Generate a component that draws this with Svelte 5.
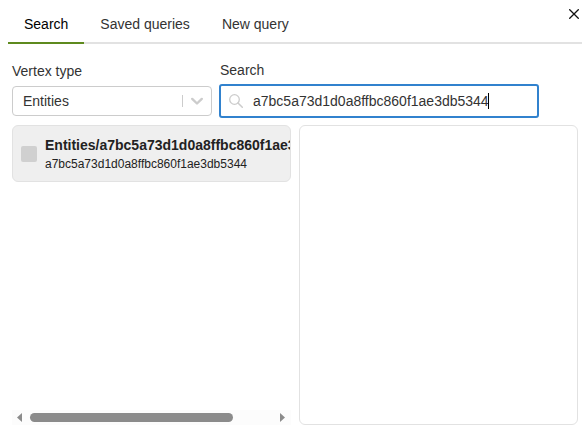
<script>
  const tabs = ['Search', 'Saved queries', 'New query'];
  let active = $state('Search');
  let vertexType = $state('Entities');
  let query = $state('a7bc5a73d1d0a8ffbc860f1ae3db5344');
  let checked = $state(false);
  const results = [
    { id: 'Entities/a7bc5a73d1d0a8ffbc860f1ae3db5344', key: 'a7bc5a73d1d0a8ffbc860f1ae3db5344' }
  ];

  const ctx = document.createElement('canvas').getContext('2d');
  ctx.font = '14px "Liberation Sans"';
  const caretOffset = $derived(Math.floor(ctx.measureText(query).width));
</script>

<div class="dialog">
  <header>
    <div class="tabs" role="tablist">
      {#each tabs as tab}
        <button class="tab" class:active={tab === active} role="tab" aria-selected={tab === active} onclick={() => (active = tab)}>{tab}</button>
      {/each}
    </div>
    <button class="close" aria-label="Close">
      <svg width="10" height="10" viewBox="0 0 10 10"><path d="M0.3 0.3 9.7 9.7M9.7 0.3 0.3 9.7" stroke="#111" stroke-width="1.3" /></svg>
    </button>
  </header>

  <main>
    <div class="fields">
      <div class="field type">
        <label for="vertex-type">Vertex type</label>
        <div class="select">
          <select id="vertex-type" bind:value={vertexType}>
            <option>Entities</option>
          </select>
          <span class="divider"></span>
          <svg class="chevron" width="20" height="20" viewBox="0 0 20 20"><path fill="none" stroke="#ccc" stroke-width="2.4" stroke-linecap="round" stroke-linejoin="round" d="M5.2 7.9 10 12.5l4.8-4.6" /></svg>
        </div>
      </div>
      <div class="field search">
        <label for="search">Search</label>
        <div class="box">
          <svg class="glass" width="14" height="14" viewBox="0 0 14 14" fill="none" stroke="#ccc"><circle cx="5.5" cy="5.5" r="4.8" stroke-width="1.3" /><path d="M9 9l4.3 4.3" stroke-width="1.5" stroke-linecap="round" /></svg>
          <div class="entry">
            <input id="search" type="text" bind:value={query} />
            <span class="caret" style="left: {caretOffset}px"></span>
          </div>
        </div>
      </div>
    </div>

    <div class="panes">
      <section class="results">
        <div class="list">
          {#each results as r}
            <label class="item">
              <input type="checkbox" bind:checked />
              <span class="text">
                <strong>{r.id}</strong>
                <span class="key">{r.key}</span>
              </span>
            </label>
          {/each}
        </div>
        <div class="scrollbar">
          <svg width="5" height="9" viewBox="0 0 5 9"><path d="M5 0v9L0 4.5z" fill="#8b8b8b" /></svg>
          <div class="track"><div class="thumb"></div></div>
          <svg width="5" height="9" viewBox="0 0 5 9"><path d="M0 0v9l5-4.5z" fill="#8b8b8b" /></svg>
        </div>
      </section>
      <section class="preview"></section>
    </div>
  </main>
</div>

<style>
  :global(body) {
    background: #fff;
  }
  .dialog {
    font: 14px/20px "Liberation Sans", Arial, sans-serif;
    color: #333;
  }
  .dialog * {
    box-sizing: border-box;
  }
  button, input, select {
    font: inherit;
    color: inherit;
    margin: 0;
    padding: 0;
    border: 0;
    background: none;
  }
  header {
    display: flex;
    margin: 0 5px 0 8px;
    padding: 4px 3px 0 0;
    align-items: flex-start;
    box-shadow: inset 0 -2px #e2e2e2;
  }
  .tabs {
    display: flex;
    flex: 1;
    height: 40px;
  }
  .tab {
    padding: 2px 16px 0;
    border-bottom: 2px solid transparent;
  }
  .tab.active {
    color: #000;
    border-bottom-color: #5e8a1e;
  }
  .close {
    display: flex;
    justify-content: flex-end;
    width: 20px;
    padding-top: 5px;
  }
  main {
    padding: 16px 9px 8px 12px;
  }
  .fields {
    display: flex;
    align-items: flex-start;
    gap: 7px;
  }
  .field > label {
    display: block;
    margin-bottom: 4px;
  }
  .type {
    flex: 0 0 200px;
    padding-top: 1px;
  }
  .type > label {
    margin-bottom: 5px;
  }
  .search {
    flex: 0 1 320px;
  }
  .search > label {
    padding-left: 1px;
  }
  .select {
    display: flex;
    align-items: center;
    height: 30px;
    border: 1px solid #ccc;
    border-radius: 4px;
  }
  select {
    appearance: none;
    flex: 1;
    height: 28px;
    padding-left: 10px;
    outline: none;
  }
  .divider {
    width: 1px;
    height: 12px;
    background: #ccc;
  }
  .chevron {
    margin: 0 4px;
  }
  .box {
    display: flex;
    align-items: center;
    height: 34px;
    padding: 0 8px;
    border: 2px solid #3182ce;
    border-radius: 3px;
  }
  .entry {
    position: relative;
    flex: 1;
    margin-left: 10px;
  }
  .entry input {
    display: block;
    width: 100%;
    height: 20px;
    outline: none;
    caret-color: transparent;
  }
  .caret {
    position: absolute;
    top: 2px;
    width: 1px;
    height: 16px;
    background: #000;
  }
  .panes {
    display: grid;
    grid-template-columns: 1fr 1fr;
    gap: 8px;
    height: 300px;
    margin-top: 7px;
  }
  .results {
    display: flex;
    flex-direction: column;
    min-width: 0;
  }
  .list {
    flex: 1;
  }
  .item {
    display: flex;
    align-items: center;
    gap: 8px;
    height: 57px;
    padding-left: 8px;
    overflow: hidden;
    background: #efefef;
    border: 1px solid #e2e2e2;
    border-radius: 6px;
    color: #222;
  }
  .item input {
    appearance: none;
    flex: none;
    width: 16px;
    height: 16px;
    border-radius: 2px;
    background: #d0d0d0;
  }
  .text {
    display: flex;
    flex-direction: column;
    white-space: nowrap;
  }
  .key {
    font-size: 12px;
    line-height: 18px;
  }
  .scrollbar {
    display: flex;
    align-items: center;
    height: 15px;
    padding: 0 6px 0 5px;
    background: #fcfcfc;
  }
  .track {
    flex: 1;
    margin: 0 8px;
  }
  .thumb {
    width: 84%;
    height: 9px;
    border-radius: 5px;
    background: #8b8b8b;
  }
  .preview {
    border: 1px solid #e2e2e2;
    border-radius: 6px;
  }
</style>
